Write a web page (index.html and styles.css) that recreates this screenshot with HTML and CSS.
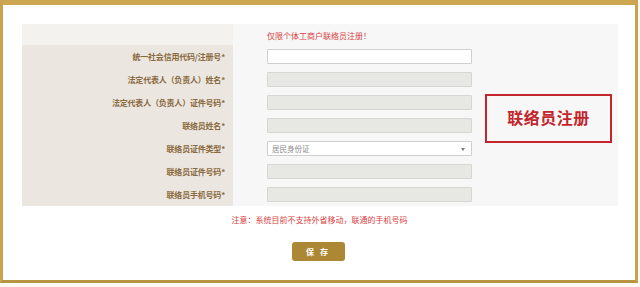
FILE: index.html
```html
<!DOCTYPE html>
<html lang="zh-CN">
<head>
<meta charset="utf-8">
<title>联络员注册</title>
<link rel="stylesheet" href="styles.css">
</head>
<body>
<div class="frame">
  <div class="panel">
    <div class="form">
      <div class="label head"></div>
      <div class="field head-field"><span class="tip">仅限个体工商户联络员注册！</span></div>

      <div class="label">统一社会信用代码/注册号*</div>
      <div class="field"><span class="input white"></span></div>

      <div class="label">法定代表人（负责人）姓名*</div>
      <div class="field"><span class="input"></span></div>

      <div class="label">法定代表人（负责人）证件号码*</div>
      <div class="field"><span class="input"></span></div>

      <div class="label">联络员姓名*</div>
      <div class="field"><span class="input"></span></div>

      <div class="label">联络员证件类型*</div>
      <div class="field"><span class="input white select">居民身份证<i class="arrow"></i></span></div>

      <div class="label">联络员证件号码*</div>
      <div class="field"><span class="input"></span></div>

      <div class="label">联络员手机号码*</div>
      <div class="field"><span class="input"></span></div>
    </div>
    <div class="stamp">联络员注册</div>
  </div>
  <p class="notice">注意：系统目前不支持外省移动，联通的手机号码</p>
  <div class="actions"><span class="btn">保 存</span></div>
</div>
</body>
</html>
```
FILE: styles.css
```css
html, body {
  margin: 0;
  padding: 0;
  background: #fbf9f3;
  font-family: "Noto Sans CJK SC", "Noto Sans", sans-serif;
}
.frame {
  box-sizing: border-box;
  width: 638px;
  height: 283px;
  background: #ffffff;
  border-top: 5px solid #cda651;
  border-left: 3px solid #c9a24d;
  border-right: 3px solid #c9a24d;
  border-bottom: 3px solid #b99443;
  padding: 19px 17px 0 19px;
}
.panel {
  position: relative;
  width: 596px;
}
.form {
  display: grid;
  grid-template-columns: 211px 1fr;
  grid-template-rows: 21px repeat(7, 23px);
  background: #f7f7f7;
}
.label {
  background: #ebe6df;
  color: #8a6a3f;
  font-size: 8px;
  font-weight: bold;
  display: flex;
  align-items: center;
  justify-content: flex-end;
  padding-right: 8px;
  white-space: nowrap;
  letter-spacing: -0.2px;
}
.label.head {
  background: #f4f2ee;
}
.field {
  display: flex;
  align-items: center;
  padding-left: 34px;
}
.tip {
  color: #d9423f;
  font-size: 8px;
  padding-top: 2px;
}
.input {
  box-sizing: border-box;
  display: flex;
  align-items: center;
  width: 205px;
  height: 15px;
  background: #e7e7e3;
  border: 1px solid #d6d6d2;
  border-radius: 1px;
}
.input.white {
  background: #ffffff;
  border-color: #cfcfcf;
}
.select {
  position: relative;
  font-size: 7.5px;
  color: #8c8c8c;
  padding-left: 4px;
}
.arrow {
  position: absolute;
  right: 6px;
  top: 6px;
  width: 0;
  height: 0;
  border-left: 2px solid transparent;
  border-right: 2px solid transparent;
  border-top: 3px solid #777777;
}
.stamp {
  position: absolute;
  left: 463px;
  top: 70px;
  box-sizing: border-box;
  width: 127px;
  height: 49px;
  border: 2px solid #c2262c;
  color: #c2262c;
  font-size: 16px;
  font-weight: bold;
  display: flex;
  align-items: center;
  justify-content: center;
  padding-bottom: 4px;
  letter-spacing: 0.5px;
}
.notice {
  margin: 8px 0 0;
  text-align: center;
  color: #d9423f;
  font-size: 8px;
  line-height: 11px;
  padding-right: 1px;
}
.actions {
  display: flex;
  justify-content: center;
  margin-top: 17px;
  padding-right: 4px;
}
.btn {
  width: 53px;
  height: 19px;
  background: #ad8834;
  border-radius: 3px;
  color: #ffffff;
  font-size: 8px;
  font-weight: bold;
  display: flex;
  align-items: center;
  justify-content: center;
  letter-spacing: 2px;
}
```
